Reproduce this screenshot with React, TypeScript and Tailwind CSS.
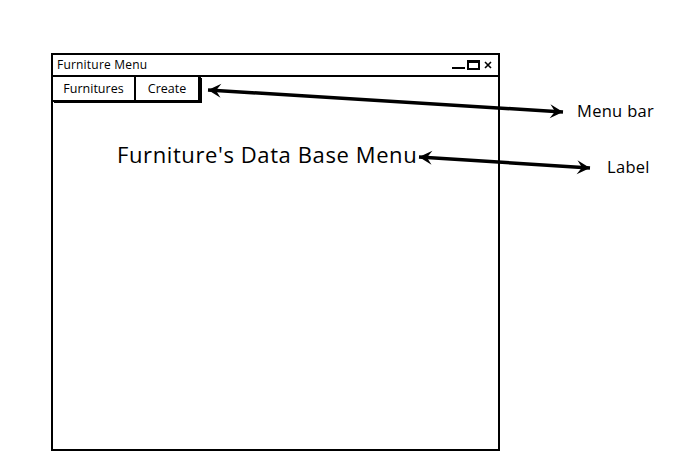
import React from "react";

// wireframe arrows drawn over the canvas
function Arrow({ x1, y1, x2, y2 }: { x1: number; y1: number; x2: number; y2: number }) {
  const a = Math.atan2(y2 - y1, x2 - x1);
  const head = (x: number, y: number, ang: number) => {
    const l = 13;
    const w = 7;
    const bx = x - l * Math.cos(ang);
    const by = y - l * Math.sin(ang);
    const px = -Math.sin(ang) * w;
    const py = Math.cos(ang) * w;
    const nx = x - 8 * Math.cos(ang);
    const ny = y - 8 * Math.sin(ang);
    return `M${x},${y} L${bx + px},${by + py} L${nx},${ny} L${bx - px},${by - py} Z`;
  };
  return (
    <g>
      <line x1={x1} y1={y1} x2={x2} y2={y2} stroke="black" strokeWidth={3.5} />
      <path d={head(x1, y1, a + Math.PI)} fill="black" />
      <path d={head(x2, y2, a)} fill="black" />
    </g>
  );
}

export default function App() {
  return (
    <div
      className="relative w-[694px] h-[474px] bg-white text-black overflow-hidden"
      style={{ fontFamily: "'Open Sans', Lato, sans-serif" }}
    >
      <div className="ml-[51px] pt-[53px]">
        <div className="w-[449px] h-[398px] border-2 border-black flex flex-col">
          <div className="h-[22px] border-b-2 border-black flex items-center justify-between pl-[4px] pr-[5px]">
            <span className="text-[12px] leading-none tracking-[0.2px]">Furniture Menu</span>
            <div className="flex items-end gap-[2px] h-[10px]">
              <div className="w-[13px] h-[2px] bg-black mb-[1px]" />
              <div className="w-[13px] h-[10px] border-2 border-t-[3px] border-black" />
              <svg width="10" height="10" viewBox="0 0 10 10" className="ml-[1px]">
                <path d="M2,2 L8,8 M8,2 L2,8" stroke="black" strokeWidth="1.6" />
              </svg>
            </div>
          </div>
          <div className="flex">
            <div className="flex h-[25px] border-b-2 border-r-[3px] border-black shadow-[1px_1px_0_black]">
              <div className="w-[83px] flex items-center justify-center border-r-2 border-black text-[12.5px] pt-[1px]">
                Furnitures
              </div>
              <div className="w-[62px] flex items-center justify-center text-[12.5px] pt-[1px]">Create</div>
            </div>
          </div>
          <div className="flex pl-[64px] pt-[41px]">
            <span className="text-[22px] leading-none tracking-[0.6px]">Furniture's Data Base Menu</span>
          </div>
        </div>
      </div>

      <svg className="absolute inset-0" width="694" height="474">
        <Arrow x1={208} y1={90} x2={563} y2={112} />
        <Arrow x1={419} y1={157} x2={590} y2={168} />
      </svg>
      <span className="absolute left-[577px] top-[103px] text-[16.5px] leading-none tracking-[0.3px]">Menu bar</span>
      <span className="absolute left-[607px] top-[159px] text-[16.5px] leading-none tracking-[0.3px]">Label</span>
    </div>
  );
}
